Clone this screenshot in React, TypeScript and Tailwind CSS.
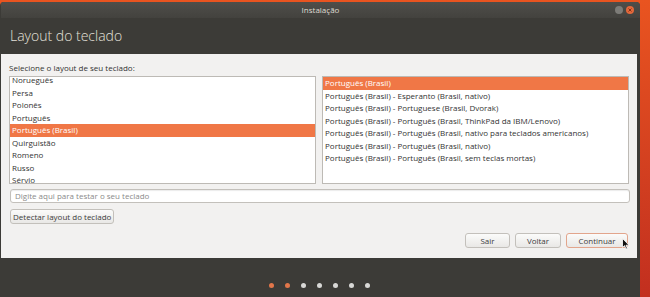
import React from 'react';

const leftItems = [
  'Norueguês',
  'Persa',
  'Polonês',
  'Português',
  'Português (Brasil)',
  'Quirguistão',
  'Romeno',
  'Russo',
  'Sérvio',
];

const rightItems = [
  'Português (Brasil)',
  'Português (Brasil) - Esperanto (Brasil, nativo)',
  'Português (Brasil) - Portuguese (Brasil, Dvorak)',
  'Português (Brasil) - Português (Brasil, ThinkPad da IBM/Lenovo)',
  'Português (Brasil) - Português (Brasil, nativo para teclados americanos)',
  'Português (Brasil) - Português (Brasil, nativo)',
  'Português (Brasil) - Português (Brasil, sem teclas mortas)',
];

function Row({ label, selected }: { label: string; selected?: boolean }) {
  return (
    <div
      className={
        'h-[12.5px] leading-[12.5px] px-[2px] whitespace-nowrap ' +
        (selected ? 'bg-[#f07746] text-white' : 'text-[#333333]')
      }
    >
      {label}
    </div>
  );
}

function Button({ children, accent }: { children: React.ReactNode; accent?: boolean }) {
  return (
    <button
      className={
        'h-[15px] rounded-[3px] border bg-gradient-to-b from-[#fbfbfa] to-[#e9e8e6] text-[8px] text-[#3c3c3c] leading-none ' +
        (accent ? 'border-[#e2a58c]' : 'border-[#c3c0bb]')
      }
    >
      {children}
    </button>
  );
}

export default function App() {
  return (
    <div
      className="w-[650px] h-[297px] overflow-hidden flex bg-gradient-to-b from-[#e95420] to-[#c22f1f] pt-[2px]"
      style={{ fontFamily: '"Open Sans", "Noto Sans", sans-serif' }}
    >
      <div className="w-[640px] flex flex-col bg-[#3c3b37] rounded-t-[4px] overflow-hidden pl-[1px]">
        {/* title bar */}
        <div className="h-[16px] relative flex items-center justify-center bg-gradient-to-b from-[#4f4e4a] to-[#43423e]">
          <span className="text-[8px] text-[#dfdbd2]">Instalação</span>
          <div className="absolute right-[6px] top-[4px] flex gap-[3px]">
            <div className="w-[8px] h-[8px] rounded-full bg-[#7d7c78]" />
            <div className="w-[8px] h-[8px] rounded-full bg-[#e3683b] flex items-center justify-center">
              <svg width="4" height="4" viewBox="0 0 4 4">
                <path d="M0.5 0.5 L3.5 3.5 M3.5 0.5 L0.5 3.5" stroke="#7a2c12" strokeWidth="0.9" />
              </svg>
            </div>
          </div>
        </div>
        {/* header */}
        <div className="h-[36px] flex items-center pl-[9px] pb-[2px]">
          <span className="text-[14px] font-light text-[#e4e1da]">Layout do teclado</span>
        </div>
        {/* content */}
        <div className="h-[204px] mr-[3px] bg-[#f2f1f0] flex flex-col px-[8px] pt-[8px] text-[8px] relative">
          <div className="h-[14px] leading-[12px] text-[#333333]">Selecione o layout de seu teclado:</div>
          <div className="flex gap-[6px]">
            <div className="w-[308px] h-[108px] border border-[#bdbab5] bg-white overflow-hidden">
              <div className="-mt-[3px]">
                {leftItems.map((l) => (
                  <Row key={l} label={l} selected={l === 'Português (Brasil)'} />
                ))}
              </div>
            </div>
            <div className="w-[308px] h-[108px] border border-[#bdbab5] bg-white overflow-hidden">
              {rightItems.map((l, i) => (
                <Row key={l} label={l} selected={i === 0} />
              ))}
            </div>
          </div>
          <div className="mt-[5px] h-[14px] w-[620px] ml-[1px] rounded-[3px] border border-[#c3c0bb] bg-white shadow-[inset_0_1px_1px_rgba(0,0,0,0.08)] flex items-center px-[4px] text-[#8a8a8a]">
            Digite aqui para testar o seu teclado
          </div>
          <div className="mt-[6px] ml-[1px] flex">
            <Button>
              <span className="px-[2px]">Detectar layout do teclado</span>
            </Button>
          </div>
          <div className="mt-[9px] flex justify-end gap-[5px] pr-[1px]">
            <div className="w-[45px] flex">
              <Button>
                <span className="block w-[43px]">Sair</span>
              </Button>
            </div>
            <div className="w-[46px] flex">
              <Button>
                <span className="block w-[44px]">Voltar</span>
              </Button>
            </div>
            <div className="w-[62px] flex">
              <Button accent>
                <span className="block w-[60px]">Continuar</span>
              </Button>
            </div>
          </div>
          <svg
            className="absolute left-[621px] top-[184px]"
            width="8"
            height="12"
            viewBox="0 0 8 12"
          >
            <path d="M0.5 0.5 L0.5 9.5 L2.6 7.6 L4 11 L5.4 10.4 L4 7.2 L7 7.2 Z" fill="#111" stroke="#fff" strokeWidth="0.8" />
          </svg>
        </div>
        {/* bottom */}
        <div className="flex-1 flex items-center justify-center gap-[11px] pr-[2px] pt-[15px]">
          {[0, 1, 2, 3, 4, 5, 6].map((i) => (
            <div
              key={i}
              className={'w-[5px] h-[5px] rounded-full ' + (i < 2 ? 'bg-[#e2764a]' : 'bg-[#d8d8d6]')}
            />
          ))}
        </div>
      </div>
    </div>
  );
}
